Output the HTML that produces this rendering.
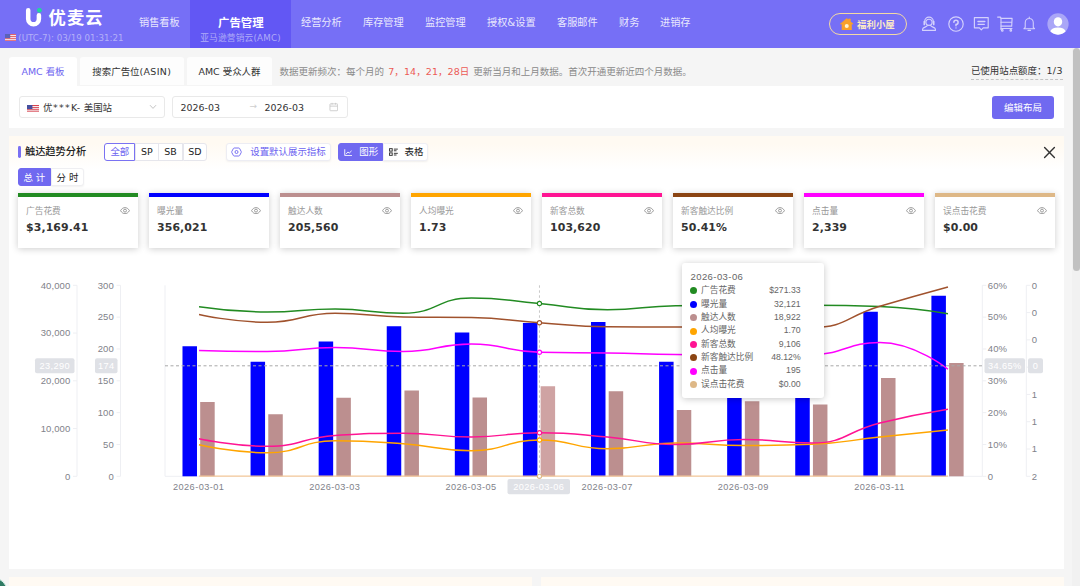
<!DOCTYPE html>
<html lang="zh-CN">
<head>
<meta charset="utf-8">
<title>优麦云 - AMC 看板</title>
<style>
*{box-sizing:border-box;margin:0;padding:0}
html,body{width:1080px;height:586px;overflow:hidden;background:#f5f5f5}
body{position:relative;font-family:"DejaVu Sans","Liberation Sans","Noto Sans CJK SC",sans-serif;font-size:10px;color:#333;-webkit-font-smoothing:antialiased}
.abs{position:absolute}
.hdr{position:absolute;left:0;top:0;width:1080px;height:47.6px;background:#766ff6}
.hdr .act{position:absolute;left:190px;top:0;width:101px;height:47.6px;background:#6257f4}
.nav{position:absolute;top:16.2px;height:14px;line-height:14px;font-size:10.2px;color:#e9e8fd;white-space:nowrap}
.nav.b{color:#fff;font-weight:bold;font-size:11.4px;top:16px}
.sub{position:absolute;top:31.8px;left:190px;width:101px;text-align:center;font-size:8.7px;line-height:12px;color:#b0acf8;letter-spacing:.2px;white-space:nowrap}
.logo-t{position:absolute;left:48.6px;top:5.2px;font-size:17.3px;line-height:26px;color:#fff;font-weight:700;letter-spacing:1.1px;white-space:nowrap}
.utc{position:absolute;left:18.3px;top:32px;font-size:8.7px;line-height:12px;color:#b4b0f8;white-space:nowrap}
.pill{position:absolute;left:829px;top:13px;width:78px;height:21.5px;border:1px solid #f3d9a4;border-radius:11px;color:#fbe9c6;font-size:10px;line-height:19.5px;white-space:nowrap}
.pill span{position:absolute;left:27px;top:.6px;font-weight:bold;font-size:9.45px}
.tab{position:absolute;top:57px;height:29px;background:#fff;border-radius:3px 3px 0 0;font-size:9.45px;line-height:29px;text-align:center;color:#333;white-space:nowrap}
.tab.off{background:#fdfdfd;height:28px}
.tab.on{color:#6c63f0}
.note{position:absolute;left:279.5px;top:57px;line-height:29px;font-size:9.5px;color:#8a8a8a;white-space:nowrap}
.note b{font-weight:normal;color:#ec5b56;margin:0 .9px 0 1.2px;letter-spacing:.08px}
.quota{position:absolute;right:17.2px;top:64.3px;font-size:9.45px;line-height:14px;color:#333;border-bottom:1px dashed #c4c4c4;white-space:nowrap;padding-bottom:.4px}
.panel{position:absolute;left:9px;width:1054.7px;background:#fff}
.inp{position:absolute;top:95.6px;height:22.8px;border:1px solid #e9e9e9;border-radius:3px;background:#fff;font-size:9.45px;line-height:21px;color:#333;white-space:nowrap}
.btn{position:absolute;left:992px;top:96px;width:62px;height:23px;border-radius:3px;background:#7069f0;color:#fff;font-size:9.45px;line-height:23px;text-align:center}
.title{position:absolute;left:25px;top:145px;font-size:10.2px;line-height:14px;color:#222;font-weight:500;white-space:nowrap}
.seg{position:absolute;top:143px;height:17.8px;border:1px solid #e6e6ec;background:#fff;font-size:9.45px;line-height:16.5px;color:#222;text-align:center;white-space:nowrap}
.card{position:absolute;top:193px;width:119.5px;height:54.5px;background:#fff;box-shadow:0 1px 7px rgba(0,0,0,.2);}
.card u{position:absolute;left:0;top:0;width:100%;height:3.6px}
.card em{font-style:normal;position:absolute;left:8px;top:11.8px;font-size:8.7px;line-height:13px;color:#999;white-space:nowrap}
.card strong{position:absolute;left:8px;top:26.5px;font-size:10.9px;line-height:16px;color:#333;font-weight:bold;letter-spacing:.12px;white-space:nowrap;font-family:"DejaVu Sans","Liberation Sans",sans-serif}
.card svg{position:absolute;left:101.8px;top:14.2px}
.chart{position:absolute;left:0;top:0}
.tip{position:absolute;left:682px;top:263px;width:142px;height:135px;background:#fff;border-radius:3px;box-shadow:0 1px 7px rgba(0,0,0,.22);font-family:"Liberation Sans","Noto Sans CJK SC",sans-serif;color:#666}
.tip .d{position:absolute;left:8.5px;top:8.4px;font-size:9.5px;letter-spacing:.42px;line-height:12px}
.tip .r{position:absolute;left:0;width:142px;height:13.35px;font-size:8.7px;line-height:13.35px}
.tip .r s{position:absolute;left:8.4px;top:3.2px;width:7px;height:7px;border-radius:50%}
.tip .r span{position:absolute;left:19px;top:0;white-space:nowrap}
.tip .r b{position:absolute;right:23.4px;top:0;font-weight:normal;white-space:nowrap;font-size:8.7px}
</style>
</head>
<body>

<!-- ===== header ===== -->
<div class="hdr">
  <div class="act"></div>
  <svg class="abs" style="left:25px;top:8px" width="20" height="20" viewBox="0 0 20 20">
    <path d="M3.2 2.3 V10.9 A5.35 5.35 0 0 0 13.9 10.9 V7.2" fill="none" stroke="#fff" stroke-width="4.5" stroke-linecap="round"/>
    <circle cx="14.4" cy="2.3" r="2.4" fill="#22d3a0"/>
  </svg>
  <div class="logo-t">优麦云</div>
  <svg class="abs" style="left:4.8px;top:33.5px" width="11.5" height="7.2" viewBox="0 0 11 7" preserveAspectRatio="none">
    <rect width="11" height="7" fill="#f3e9ee"/>
    <rect y="0" width="11" height="1" fill="#e0626c"/><rect y="2" width="11" height="1" fill="#e0626c"/><rect y="4" width="11" height="1" fill="#e0626c"/><rect y="6" width="11" height="1" fill="#e0626c"/>
    <rect width="5" height="4" fill="#5b62b8"/>
  </svg>
  <div class="utc">(UTC-7): 03/19 01:31:21</div>

  <div class="nav" style="left:139px">销售看板</div>
  <div class="nav b" style="left:218px">广告管理</div>
  <div class="sub">亚马逊营销云(AMC)</div>
  <div class="nav" style="left:301px">经营分析</div>
  <div class="nav" style="left:363px">库存管理</div>
  <div class="nav" style="left:425px">监控管理</div>
  <div class="nav" style="left:487px">授权&amp;设置</div>
  <div class="nav" style="left:557px">客服邮件</div>
  <div class="nav" style="left:619px">财务</div>
  <div class="nav" style="left:660px">进销存</div>

  <div class="pill">
    <svg class="abs" style="left:10.1px;top:3.7px" width="13.5" height="12.5" viewBox="0 0 13.5 12.5">
      <path d="M6.75 0.4 L8.6 2 V0.9 H10.4 V3.6 L13.2 6 H11.5 V12 H2 V6 H0.3 Z" fill="#f9a02c" stroke="#f9a02c" stroke-width=".6" stroke-linejoin="round"/>
      <circle cx="6.75" cy="8.1" r="2" fill="#fff3cf"/>
    </svg>
    <span>福利小屋</span>
  </div>

  <!-- headset -->
  <svg class="abs" style="left:920px;top:15px" width="18" height="18" viewBox="0 0 18 18" fill="none" stroke="#d4d1fc" stroke-width="1.15" stroke-linecap="round" stroke-linejoin="round">
    <path d="M4.7 7.2 V6.4 A4.3 4.3 0 0 1 13.3 6.4 V7.2"/>
    <circle cx="9" cy="7.3" r="3.1"/>
    <path d="M4.3 6.6 V9.4 M13.7 6.6 V9.4" stroke-width="1.7"/>
    <path d="M7.4 10.2 C7.4 12 3 12.2 2.6 14 V15.4 H15.4 V14 C15 12.2 10.6 12 10.6 10.2"/>
  </svg>
  <!-- help -->
  <svg class="abs" style="left:946.5px;top:15px" width="18" height="18" viewBox="0 0 18 18" fill="none" stroke="#d4d1fc" stroke-width="1.15" stroke-linecap="round">
    <circle cx="9" cy="9" r="7.2"/>
    <path d="M6.9 7.3 A2.1 2.1 0 1 1 9 9.4 V10.7" stroke-width="1.5"/>
    <circle cx="9" cy="12.9" r=".7" fill="#d4d1fc" stroke="none"/>
  </svg>
  <!-- message -->
  <svg class="abs" style="left:972px;top:15px" width="18" height="18" viewBox="0 0 18 18" fill="none" stroke="#d4d1fc" stroke-width="1.15" stroke-linecap="round" stroke-linejoin="round">
    <path d="M2.4 2.6 H16.2 V12.8 H11.2 L9.3 14.8 L7.4 12.8 H2.4 Z"/>
    <path d="M6 6.4 H12.8" stroke-width="1.5"/><path d="M6 9.3 H12.4"/>
  </svg>
  <!-- cart -->
  <svg class="abs" style="left:996px;top:14px" width="19" height="19" viewBox="0 0 19 19" fill="none" stroke="#d4d1fc" stroke-width="1.1" stroke-linecap="round" stroke-linejoin="round">
    <path d="M1.6 3.1 H4.4 L5 4.2 V15.6"/>
    <path d="M5 4.4 H16.1 L15.7 12.1 H5 M5 8.3 H15.8 M5 14.5 H16"/>
    <circle cx="6.3" cy="16.4" r=".8"/><circle cx="14.8" cy="16.4" r=".8"/>
  </svg>
  <!-- bell -->
  <svg class="abs" style="left:1021.2px;top:15px" width="16.5" height="17.4" viewBox="0 0 18 19" fill="none" stroke="#d4d1fc" stroke-width="1.15" stroke-linecap="round" stroke-linejoin="round">
    <path d="M9 2.2 V3.2 M4.6 13.6 V8.4 A4.4 4.6 0 0 1 13.4 8.4 V13.6 L14.8 15 H3.2 Z"/>
    <path d="M7.6 16.8 H10.4"/>
  </svg>
  <!-- avatar -->
  <svg class="abs" style="left:1046.5px;top:13px" width="22" height="22" viewBox="0 0 24 24">
    <circle cx="12" cy="12" r="11.6" fill="#aaa6f7"/>
    <ellipse cx="12" cy="9.6" rx="4.6" ry="5" fill="#fff"/>
    <path d="M3.6 20 A8.6 5.4 0 0 1 20.4 20 A11.6 11.6 0 0 1 3.6 20 Z" fill="#fff"/>
  </svg>
</div>

<!-- ===== tabs ===== -->
<div class="tab on" style="left:9px;width:68px">AMC 看板</div>
<div class="tab off" style="left:80px;width:103.5px">搜索广告位<span style="letter-spacing:.32px">(ASIN)</span></div>
<div class="tab off" style="left:187px;width:85px">AMC 受众人群</div>
<div class="note">数据更新频次：每个月的 <b>7，14，21，28日</b> 更新当月和上月数据。首次开通更新近四个月数据。</div>
<div class="quota">已使用站点额度：<span style="letter-spacing:.4px">1/3</span></div>

<!-- ===== filter panel ===== -->
<div class="panel" style="top:86px;height:41.6px"></div>
<div class="inp" style="left:19px;width:146px">
  <svg class="abs" style="left:7px;top:8.2px" width="12" height="7.4" viewBox="0 0 12 8" preserveAspectRatio="none">
    <rect width="12" height="8" fill="#f6eef0"/>
    <rect y="0" width="12" height="1.1" fill="#d9434f"/><rect y="2.3" width="12" height="1.1" fill="#d9434f"/><rect y="4.6" width="12" height="1.1" fill="#d9434f"/><rect y="6.9" width="12" height="1.1" fill="#d9434f"/>
    <rect width="5.4" height="4.4" fill="#46509f"/>
  </svg>
  <span class="abs" style="left:23px;top:0">优<span style="letter-spacing:1.3px;margin-left:.6px">***</span><span style="letter-spacing:.5px">K-</span> 美国站</span>
  <svg class="abs" style="left:129px;top:7.5px" width="8" height="6" viewBox="0 0 8 6" fill="none" stroke="#c4c4c4" stroke-width="1"><path d="M1 1.2 L4 4.4 L7 1.2"/></svg>
</div>
<div class="inp" style="left:172px;width:175.5px">
  <span class="abs" style="left:7.5px;top:0">2026-03</span>
  <span class="abs" style="left:76.4px;top:-.6px;color:#cfcfcf;font-size:9px">→</span>
  <span class="abs" style="left:91.5px;top:0">2026-03</span>
  <svg class="abs" style="left:155.8px;top:5.8px" width="9.6" height="9.8" viewBox="0 0 10 10" fill="none" stroke="#c9c9c9" stroke-width=".9"><rect x="1" y="1.8" width="8" height="7.2" rx=".6"/><path d="M1 4.2 H9 M3.2 .8 V2.6 M6.8 .8 V2.6"/></svg>
</div>
<div class="btn">编辑布局</div>

<!-- ===== main panel ===== -->
<div class="panel" style="top:135.6px;height:433.7px;background:linear-gradient(#fffaf2 0,#fffaf2 8px,#fff 34px)"></div>
<div class="abs" style="left:17.7px;top:146px;width:2.9px;height:11.6px;border-radius:1.4px;background:#7a70f3"></div>
<div class="title">触达趋势分析</div>

<div class="seg" style="left:135px;width:23.5px">SP</div>
<div class="seg" style="left:158px;width:25px">SB</div>
<div class="seg" style="left:182.5px;width:24.7px;border-radius:0 3px 3px 0">SD</div>
<div class="seg" style="left:104.2px;width:31.3px;border-color:#7a72f2;border-radius:3px 0 0 3px;color:#6c63f0">全部</div>

<div class="seg" style="left:225.8px;width:105.4px;border-radius:3px;text-align:left;border-color:#ededf3;box-shadow:0 1px 2px rgba(0,0,0,.05)">
  <svg class="abs" style="left:4.7px;top:3.2px" width="11" height="10" viewBox="0 0 11 10" fill="none" stroke="#6c63f0" stroke-width=".9" stroke-linejoin="round"><path d="M3.2 1 H7.8 Q8.3 1 8.6 1.5 L10.2 4.5 Q10.4 5 10.2 5.5 L8.6 8.5 Q8.3 9 7.8 9 H3.2 Q2.7 9 2.4 8.5 L.8 5.5 Q.6 5 .8 4.5 L2.4 1.5 Q2.7 1 3.2 1 Z"/><circle cx="5.5" cy="5" r="1.5"/></svg>
  <span class="abs" style="left:23.4px;top:0;color:#6c63f0">设置默认展示指标</span>
</div>

<div class="seg" style="left:383px;width:45.3px;border-radius:0 3px 3px 0;text-align:left;border-color:#efeff4;box-shadow:0 1px 2px rgba(0,0,0,.06)">
  <svg class="abs" style="left:5.2px;top:4.2px" width="9.2" height="8.3" viewBox="0 0 10 9" fill="none" stroke="#333" stroke-width="1.05"><rect x=".6" y=".7" width="2.9" height="2.7"/><rect x=".6" y="5.3" width="2.9" height="2.7"/><path d="M5.3 1.2 H9.6 M5.3 3 H8.2 M5.3 5.8 H9.6 M5.3 7.6 H8.2"/></svg>
  <span class="abs" style="left:20.6px;top:0">表格</span>
</div>
<div class="seg" style="left:337.7px;width:45.5px;border-color:#7069f0;background:#7069f0;border-radius:3px 0 0 3px;color:#fff;text-align:left">
  <svg class="abs" style="left:5.4px;top:4.6px" width="8.4" height="7.4" viewBox="0 0 9 9" preserveAspectRatio="none" fill="none" stroke="#fff" stroke-width="1" stroke-linecap="round" stroke-linejoin="round"><path d="M.8 .8 V8 H8.4 M2.4 6 L4.2 3.6 L5.6 5 L7.8 2.6"/></svg>
  <span class="abs" style="left:20.5px;top:0">图形</span>
</div>
<svg class="abs" style="left:1043px;top:146px" width="13" height="13" viewBox="0 0 13 13" fill="none" stroke="#333" stroke-width="1.4" stroke-linecap="round"><path d="M1.6 1.6 L11.4 11.4 M11.4 1.6 L1.6 11.4"/></svg>

<div class="seg" style="left:51px;top:168.2px;width:33px;height:17.8px;line-height:17.6px;border-color:#efeff2;border-radius:0 3px 3px 0;box-shadow:0 1px 2px rgba(0,0,0,.06)">分 时</div>
<div class="seg" style="left:17.6px;top:168.2px;width:33.6px;height:17.8px;line-height:17.6px;border-color:#7069f0;background:#7069f0;border-radius:3px 0 0 3px;color:#fff">总 计</div>

<!-- ===== metric cards ===== -->
<div class="card" style="left:18px"><u style="background:#228b22"></u><em>广告花费</em><strong>$3,169.41</strong><svg width="10" height="7.3" viewBox="0 0 11 8" fill="none" stroke="#8e8e8e" stroke-width=".95"><path d="M.6 4 C2.2 1.4 3.8 .7 5.5 .7 S8.8 1.4 10.4 4 C8.8 6.6 7.2 7.3 5.5 7.3 S2.2 6.6 .6 4 Z"/><circle cx="5.5" cy="4" r="1.6"/></svg></div>
<div class="card" style="left:149px"><u style="background:#0000ff"></u><em>曝光量</em><strong>356,021</strong><svg width="10" height="7.3" viewBox="0 0 11 8" fill="none" stroke="#8e8e8e" stroke-width=".95"><path d="M.6 4 C2.2 1.4 3.8 .7 5.5 .7 S8.8 1.4 10.4 4 C8.8 6.6 7.2 7.3 5.5 7.3 S2.2 6.6 .6 4 Z"/><circle cx="5.5" cy="4" r="1.6"/></svg></div>
<div class="card" style="left:280px"><u style="background:#bc8f8f"></u><em>触达人数</em><strong>205,560</strong><svg width="10" height="7.3" viewBox="0 0 11 8" fill="none" stroke="#8e8e8e" stroke-width=".95"><path d="M.6 4 C2.2 1.4 3.8 .7 5.5 .7 S8.8 1.4 10.4 4 C8.8 6.6 7.2 7.3 5.5 7.3 S2.2 6.6 .6 4 Z"/><circle cx="5.5" cy="4" r="1.6"/></svg></div>
<div class="card" style="left:411px"><u style="background:#ffa500"></u><em>人均曝光</em><strong>1.73</strong><svg width="10" height="7.3" viewBox="0 0 11 8" fill="none" stroke="#8e8e8e" stroke-width=".95"><path d="M.6 4 C2.2 1.4 3.8 .7 5.5 .7 S8.8 1.4 10.4 4 C8.8 6.6 7.2 7.3 5.5 7.3 S2.2 6.6 .6 4 Z"/><circle cx="5.5" cy="4" r="1.6"/></svg></div>
<div class="card" style="left:542px"><u style="background:#ff1493"></u><em>新客总数</em><strong>103,620</strong><svg width="10" height="7.3" viewBox="0 0 11 8" fill="none" stroke="#8e8e8e" stroke-width=".95"><path d="M.6 4 C2.2 1.4 3.8 .7 5.5 .7 S8.8 1.4 10.4 4 C8.8 6.6 7.2 7.3 5.5 7.3 S2.2 6.6 .6 4 Z"/><circle cx="5.5" cy="4" r="1.6"/></svg></div>
<div class="card" style="left:673px"><u style="background:#8b4513"></u><em>新客触达比例</em><strong>50.41%</strong><svg width="10" height="7.3" viewBox="0 0 11 8" fill="none" stroke="#8e8e8e" stroke-width=".95"><path d="M.6 4 C2.2 1.4 3.8 .7 5.5 .7 S8.8 1.4 10.4 4 C8.8 6.6 7.2 7.3 5.5 7.3 S2.2 6.6 .6 4 Z"/><circle cx="5.5" cy="4" r="1.6"/></svg></div>
<div class="card" style="left:804px"><u style="background:#ff00ff"></u><em>点击量</em><strong>2,339</strong><svg width="10" height="7.3" viewBox="0 0 11 8" fill="none" stroke="#8e8e8e" stroke-width=".95"><path d="M.6 4 C2.2 1.4 3.8 .7 5.5 .7 S8.8 1.4 10.4 4 C8.8 6.6 7.2 7.3 5.5 7.3 S2.2 6.6 .6 4 Z"/><circle cx="5.5" cy="4" r="1.6"/></svg></div>
<div class="card" style="left:935px"><u style="background:#deb887"></u><em>误点击花费</em><strong>$0.00</strong><svg width="10" height="7.3" viewBox="0 0 11 8" fill="none" stroke="#8e8e8e" stroke-width=".95"><path d="M.6 4 C2.2 1.4 3.8 .7 5.5 .7 S8.8 1.4 10.4 4 C8.8 6.6 7.2 7.3 5.5 7.3 S2.2 6.6 .6 4 Z"/><circle cx="5.5" cy="4" r="1.6"/></svg></div>

<!-- ===== chart ===== -->
<svg class="chart" width="1080" height="586" viewBox="0 0 1080 586" font-family="Liberation Sans, sans-serif" font-size="9.2" letter-spacing="0.42" fill="#7f828a">
<line x1="77" y1="285.3" x2="77" y2="476.3" stroke="#eeeff3" stroke-width="1"/>
<line x1="120.5" y1="285.3" x2="120.5" y2="476.3" stroke="#eeeff3" stroke-width="1"/>
<line x1="165" y1="285.3" x2="165" y2="476.3" stroke="#eeeff3" stroke-width="1"/>
<line x1="982.3" y1="285.3" x2="982.3" y2="476.3" stroke="#eeeff3" stroke-width="1"/>
<line x1="1026.3" y1="285.3" x2="1026.3" y2="476.3" stroke="#eeeff3" stroke-width="1"/>
<line x1="165" y1="476.3" x2="982.3" y2="476.3" stroke="#eeeff3" stroke-width="1"/>
<line x1="73" y1="476.30" x2="77" y2="476.30" stroke="#eeeff3"/>
<text x="70.4" y="479.50" text-anchor="end" font-size="9.5" letter-spacing="0.1">0</text>
<line x1="73" y1="428.55" x2="77" y2="428.55" stroke="#eeeff3"/>
<text x="70.4" y="431.75" text-anchor="end" font-size="9.5" letter-spacing="0.1">10,000</text>
<line x1="73" y1="380.80" x2="77" y2="380.80" stroke="#eeeff3"/>
<text x="70.4" y="384.00" text-anchor="end" font-size="9.5" letter-spacing="0.1">20,000</text>
<line x1="73" y1="333.05" x2="77" y2="333.05" stroke="#eeeff3"/>
<text x="70.4" y="336.25" text-anchor="end" font-size="9.5" letter-spacing="0.1">30,000</text>
<line x1="73" y1="285.30" x2="77" y2="285.30" stroke="#eeeff3"/>
<text x="70.4" y="288.50" text-anchor="end" font-size="9.5" letter-spacing="0.1">40,000</text>
<line x1="116.5" y1="476.30" x2="120.5" y2="476.30" stroke="#eeeff3"/>
<text x="113.9" y="479.50" text-anchor="end" font-size="9.5" letter-spacing="0.1">0</text>
<line x1="116.5" y1="444.47" x2="120.5" y2="444.47" stroke="#eeeff3"/>
<text x="113.9" y="447.67" text-anchor="end" font-size="9.5" letter-spacing="0.1">50</text>
<line x1="116.5" y1="412.63" x2="120.5" y2="412.63" stroke="#eeeff3"/>
<text x="113.9" y="415.83" text-anchor="end" font-size="9.5" letter-spacing="0.1">100</text>
<line x1="116.5" y1="380.80" x2="120.5" y2="380.80" stroke="#eeeff3"/>
<text x="113.9" y="384.00" text-anchor="end" font-size="9.5" letter-spacing="0.1">150</text>
<line x1="116.5" y1="348.97" x2="120.5" y2="348.97" stroke="#eeeff3"/>
<text x="113.9" y="352.17" text-anchor="end" font-size="9.5" letter-spacing="0.1">200</text>
<line x1="116.5" y1="317.13" x2="120.5" y2="317.13" stroke="#eeeff3"/>
<text x="113.9" y="320.33" text-anchor="end" font-size="9.5" letter-spacing="0.1">250</text>
<line x1="116.5" y1="285.30" x2="120.5" y2="285.30" stroke="#eeeff3"/>
<text x="113.9" y="288.50" text-anchor="end" font-size="9.5" letter-spacing="0.1">300</text>
<line x1="982.3" y1="476.30" x2="986.3" y2="476.30" stroke="#eeeff3"/>
<text x="987.8" y="479.50" font-size="9.5" letter-spacing="0.1">0</text>
<line x1="982.3" y1="444.47" x2="986.3" y2="444.47" stroke="#eeeff3"/>
<text x="987.8" y="447.67" font-size="9.5" letter-spacing="0.1">10%</text>
<line x1="982.3" y1="412.63" x2="986.3" y2="412.63" stroke="#eeeff3"/>
<text x="987.8" y="415.83" font-size="9.5" letter-spacing="0.1">20%</text>
<line x1="982.3" y1="380.80" x2="986.3" y2="380.80" stroke="#eeeff3"/>
<text x="987.8" y="384.00" font-size="9.5" letter-spacing="0.1">30%</text>
<line x1="982.3" y1="348.97" x2="986.3" y2="348.97" stroke="#eeeff3"/>
<text x="987.8" y="352.17" font-size="9.5" letter-spacing="0.1">40%</text>
<line x1="982.3" y1="317.13" x2="986.3" y2="317.13" stroke="#eeeff3"/>
<text x="987.8" y="320.33" font-size="9.5" letter-spacing="0.1">50%</text>
<line x1="982.3" y1="285.30" x2="986.3" y2="285.30" stroke="#eeeff3"/>
<text x="987.8" y="288.50" font-size="9.5" letter-spacing="0.1">60%</text>
<line x1="1026.3" y1="476.30" x2="1030.3" y2="476.30" stroke="#eeeff3"/>
<text x="1031.8" y="479.50" font-size="9.5" letter-spacing="0.1">2</text>
<line x1="1026.3" y1="449.01" x2="1030.3" y2="449.01" stroke="#eeeff3"/>
<text x="1031.8" y="452.21" font-size="9.5" letter-spacing="0.1">1</text>
<line x1="1026.3" y1="421.73" x2="1030.3" y2="421.73" stroke="#eeeff3"/>
<text x="1031.8" y="424.93" font-size="9.5" letter-spacing="0.1">1</text>
<line x1="1026.3" y1="394.44" x2="1030.3" y2="394.44" stroke="#eeeff3"/>
<text x="1031.8" y="397.64" font-size="9.5" letter-spacing="0.1">1</text>
<line x1="1026.3" y1="367.16" x2="1030.3" y2="367.16" stroke="#eeeff3"/>
<line x1="1026.3" y1="339.87" x2="1030.3" y2="339.87" stroke="#eeeff3"/>
<text x="1031.8" y="343.07" font-size="9.5" letter-spacing="0.1">0</text>
<line x1="1026.3" y1="312.59" x2="1030.3" y2="312.59" stroke="#eeeff3"/>
<text x="1031.8" y="315.79" font-size="9.5" letter-spacing="0.1">0</text>
<line x1="1026.3" y1="285.30" x2="1030.3" y2="285.30" stroke="#eeeff3"/>
<text x="1031.8" y="288.50" font-size="9.5" letter-spacing="0.1">0</text>
<rect x="182.49" y="346.25" width="14.5" height="130.05" fill="#0000ff"/>
<rect x="200.19" y="402.00" width="14.5" height="74.30" fill="#bc8f8f"/>
<rect x="250.57" y="361.75" width="14.5" height="114.55" fill="#0000ff"/>
<rect x="268.27" y="414.25" width="14.5" height="62.05" fill="#bc8f8f"/>
<rect x="318.66" y="341.50" width="14.5" height="134.80" fill="#0000ff"/>
<rect x="336.36" y="397.75" width="14.5" height="78.55" fill="#bc8f8f"/>
<rect x="386.74" y="326.25" width="14.5" height="150.05" fill="#0000ff"/>
<rect x="404.44" y="390.50" width="14.5" height="85.80" fill="#bc8f8f"/>
<rect x="454.82" y="332.50" width="14.5" height="143.80" fill="#0000ff"/>
<rect x="472.52" y="397.50" width="14.5" height="78.80" fill="#bc8f8f"/>
<rect x="522.91" y="323.00" width="14.5" height="153.30" fill="#0000ff"/>
<rect x="540.61" y="386.25" width="14.5" height="90.05" fill="#cfa3a3"/>
<rect x="590.99" y="322.00" width="14.5" height="154.30" fill="#0000ff"/>
<rect x="608.69" y="391.25" width="14.5" height="85.05" fill="#bc8f8f"/>
<rect x="659.08" y="361.75" width="14.5" height="114.55" fill="#0000ff"/>
<rect x="676.77" y="410.00" width="14.5" height="66.30" fill="#bc8f8f"/>
<rect x="727.16" y="330.00" width="14.5" height="146.30" fill="#0000ff"/>
<rect x="744.86" y="401.25" width="14.5" height="75.05" fill="#bc8f8f"/>
<rect x="795.24" y="340.00" width="14.5" height="136.30" fill="#0000ff"/>
<rect x="812.94" y="404.50" width="14.5" height="71.80" fill="#bc8f8f"/>
<rect x="863.33" y="311.75" width="14.5" height="164.55" fill="#0000ff"/>
<rect x="881.02" y="378.00" width="14.5" height="98.30" fill="#bc8f8f"/>
<rect x="931.41" y="295.75" width="14.5" height="180.55" fill="#0000ff"/>
<rect x="949.11" y="363.00" width="14.5" height="113.30" fill="#bc8f8f"/>
<path d="M199.04 306.75 C199.04 306.75 233.05 312.00 267.12 312.00 C301.13 312.00 301.18 309.00 335.21 309.00 C369.27 309.00 369.63 313.25 403.29 313.25 C437.72 313.25 436.97 298.00 471.38 298.00 C505.06 298.00 505.43 300.56 539.46 303.50 C573.52 306.44 573.46 309.75 607.54 309.75 C641.54 309.75 641.55 306.20 675.62 305.75 C709.64 305.30 709.67 305.30 743.71 305.30 C777.75 305.30 777.75 305.30 811.79 305.30 C845.84 305.30 845.93 305.30 879.88 306.50 C914.01 307.71 947.96 313.75 947.96 313.75" fill="none" stroke="#228b22" stroke-width="1.5" stroke-linejoin="round"/>
<path d="M199.04 444.75 C199.04 444.75 233.23 452.75 267.12 452.75 C301.31 452.75 300.92 440.75 335.21 440.75 C369.01 440.75 369.32 441.26 403.29 443.75 C437.41 446.26 437.45 450.75 471.38 450.75 C505.54 450.75 505.35 440.00 539.46 440.00 C573.43 440.00 573.42 448.75 607.54 448.75 C641.50 448.75 641.53 443.00 675.62 443.00 C709.62 443.00 709.66 445.50 743.71 445.50 C777.74 445.50 777.84 445.50 811.79 444.25 C845.93 442.99 845.83 440.56 879.88 437.00 C913.91 433.44 947.96 430.00 947.96 430.00" fill="none" stroke="#ffa500" stroke-width="1.5" stroke-linejoin="round"/>
<path d="M199.04 438.75 C199.04 438.75 233.19 446.25 267.12 446.25 C301.27 446.25 300.97 437.78 335.21 435.50 C369.05 433.25 369.27 433.25 403.29 433.25 C437.35 433.25 437.34 437.00 471.38 437.00 C505.42 437.00 505.42 432.75 539.46 432.75 C573.50 432.75 573.57 434.07 607.54 437.00 C641.65 439.94 641.53 444.50 675.62 444.50 C709.61 444.50 709.64 439.50 743.71 439.50 C777.73 439.50 778.43 443.00 811.79 443.00 C846.52 443.00 845.47 431.53 879.88 423.00 C913.55 414.65 947.96 409.25 947.96 409.25" fill="none" stroke="#ff1493" stroke-width="1.5" stroke-linejoin="round"/>
<path d="M199.04 314.50 C199.04 314.50 233.12 322.25 267.12 322.25 C301.20 322.25 301.05 313.25 335.21 313.25 C369.13 313.25 369.22 316.50 403.29 317.00 C437.31 317.50 437.38 317.00 471.38 317.50 C505.47 318.00 505.40 320.44 539.46 322.75 C573.48 325.06 573.47 326.50 607.54 326.75 C641.55 327.00 641.58 327.00 675.62 327.00 C709.67 327.00 709.67 327.00 743.71 327.00 C777.75 327.00 778.54 327.50 811.79 327.50 C846.62 327.50 845.70 316.46 879.88 306.30 C913.79 296.21 947.96 287.00 947.96 287.00" fill="none" stroke="#a0522d" stroke-width="1.5" stroke-linejoin="round"/>
<path d="M199.04 350.50 C199.04 350.50 233.11 351.50 267.12 351.50 C301.19 351.50 301.17 347.50 335.21 347.50 C369.25 347.50 369.32 351.50 403.29 351.50 C437.41 351.50 437.35 344.00 471.38 344.00 C505.44 344.00 505.29 351.49 539.46 352.25 C573.38 353.00 573.50 352.44 607.54 353.00 C641.59 353.56 641.58 354.00 675.62 354.50 C709.66 355.00 709.67 355.00 743.71 355.00 C777.75 355.00 778.01 355.00 811.79 354.50 C846.09 353.99 846.79 342.50 879.88 342.50 C914.88 342.50 947.96 369.25 947.96 369.25" fill="none" stroke="#ff00ff" stroke-width="1.5" stroke-linejoin="round"/>
<line x1="199.04" y1="476.1" x2="947.96" y2="476.1" stroke="#f5c99a" stroke-width="1.2"/>
<line x1="539.46" y1="285.3" x2="539.46" y2="476.3" stroke="#c8c8c8" stroke-width="1" stroke-dasharray="2.5 2.5"/>
<line x1="165" y1="365.8" x2="982.3" y2="365.8" stroke="#a9a9a9" stroke-width="1" stroke-dasharray="3 2.5"/>
<circle cx="539.46" cy="303.50" r="2.1" fill="#fff" stroke="#228b22" stroke-width="1.1"/>
<circle cx="539.46" cy="322.75" r="2.1" fill="#fff" stroke="#a0522d" stroke-width="1.1"/>
<circle cx="539.46" cy="352.25" r="2.1" fill="#fff" stroke="#ff00ff" stroke-width="1.1"/>
<circle cx="539.46" cy="432.75" r="2.1" fill="#fff" stroke="#ff1493" stroke-width="1.1"/>
<circle cx="539.46" cy="440.00" r="2.1" fill="#fff" stroke="#ffa500" stroke-width="1.1"/>
<circle cx="539.46" cy="476.30" r="2.1" fill="#fff" stroke="#deb887" stroke-width="1.1"/>
<rect x="35" y="358.3" width="39.5" height="15" rx="2" fill="#dfe1e6"/>
<text x="54.75" y="369.3" text-anchor="middle" fill="#fff">23,290</text>
<rect x="95" y="358.3" width="22.5" height="15" rx="2" fill="#dfe1e6"/>
<text x="106.25" y="369.3" text-anchor="middle" fill="#fff">174</text>
<rect x="984.5" y="358.3" width="40.5" height="15" rx="2" fill="#dfe1e6"/>
<text x="1004.75" y="369.3" text-anchor="middle" fill="#fff">34.65%</text>
<rect x="1028" y="358.3" width="15" height="15" rx="2" fill="#dfe1e6"/>
<text x="1035.5" y="369.3" text-anchor="middle" fill="#fff">0</text>
<rect x="507.5" y="479" width="62.5" height="15.2" rx="2" fill="#dfe1e6"/>
<text x="538.75" y="490.1" text-anchor="middle" fill="#fff">2026-03-06</text>
<text x="198.64" y="489.8" text-anchor="middle">2026-03-01</text>
<text x="334.81" y="489.8" text-anchor="middle">2026-03-03</text>
<text x="470.98" y="489.8" text-anchor="middle">2026-03-05</text>
<text x="607.14" y="489.8" text-anchor="middle">2026-03-07</text>
<text x="743.31" y="489.8" text-anchor="middle">2026-03-09</text>
<text x="879.48" y="489.8" text-anchor="middle">2026-03-11</text>
</svg>

<!-- ===== tooltip ===== -->
<div class="tip">
  <div class="d">2026-03-06</div>
  <div class="r" style="top:21.30px"><s style="background:#228b22"></s><span>广告花费</span><b>$271.33</b></div>
  <div class="r" style="top:34.65px"><s style="background:#0000ff"></s><span>曝光量</span><b>32,121</b></div>
  <div class="r" style="top:48.00px"><s style="background:#bc8f8f"></s><span>触达人数</span><b>18,922</b></div>
  <div class="r" style="top:61.35px"><s style="background:#ffa500"></s><span>人均曝光</span><b>1.70</b></div>
  <div class="r" style="top:74.70px"><s style="background:#ff1493"></s><span>新客总数</span><b>9,106</b></div>
  <div class="r" style="top:88.05px"><s style="background:#8b4513"></s><span>新客触达比例</span><b>48.12%</b></div>
  <div class="r" style="top:101.40px"><s style="background:#ff00ff"></s><span>点击量</span><b>195</b></div>
  <div class="r" style="top:114.75px"><s style="background:#deb887"></s><span>误点击花费</span><b>$0.00</b></div>
</div>

<!-- ===== next-row panels (peeking) ===== -->
<div class="panel" style="left:9px;top:576.5px;width:523px;height:20px;background:#fffaf3"></div>
<div class="panel" style="left:541px;top:576.5px;width:523px;height:20px;background:#fffaf3"></div>
<div class="abs" style="left:-17px;top:577.5px;width:24px;height:24px;border-radius:50%;background:#2f7a63;border:1.6px solid #d9f3ea"></div>

<!-- ===== scrollbar ===== -->
<div class="abs" style="left:1072px;top:47.6px;width:8px;height:540px;background:#f1f1f1"></div>
<div class="abs" style="left:1072.8px;top:48px;width:7px;height:223px;border-radius:3.5px;background:#c1c1c1"></div>

</body>
</html>
